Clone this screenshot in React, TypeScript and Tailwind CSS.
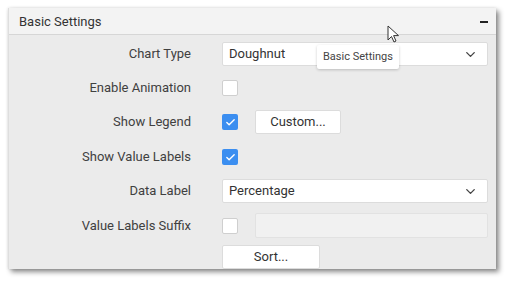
import { ChevronDown, Check } from "lucide-react";

const font = { fontFamily: "Roboto, 'Liberation Sans', sans-serif" };

const Label = ({ text }: { text: string }) => (
  <div className="w-[182px] shrink-0 text-right text-[13px] text-[#404040]">{text}</div>
);

const Box = ({ checked }: { checked?: boolean }) =>
  checked ? (
    <div className="w-4 h-4 rounded-[2px] bg-[#3b8ef0] flex items-center justify-center">
      <Check size={11} strokeWidth={3} className="text-white" />
    </div>
  ) : (
    <div className="w-4 h-4 rounded-[2px] bg-white border border-[#cfcfcf]" />
  );

const Select = ({ value }: { value: string }) => (
  <div className="flex-1 mr-[8px] h-6 bg-white border border-[#dcdcdc] rounded-[2px] flex items-center justify-between pl-[6px] pr-[9px] text-[13px] text-[#333]">
    <span>{value}</span>
    <ChevronDown size={15} strokeWidth={2.2} className="text-[#444]" />
  </div>
);

export default function App() {
  return (
    <div className="w-[509px] h-[283px] bg-white relative" style={font}>
      <div className="absolute left-[8px] top-[8px] w-[488px] h-[261px] bg-[#ebebeb] border-l border-[#dedede] shadow-[3px_3px_5px_rgba(0,0,0,0.45),0_0_3px_rgba(0,0,0,0.12)] flex flex-col overflow-hidden">
        <div className="h-[27px] pt-[2px] bg-[#f3f3f3] border-b border-[#d6d6d6] flex items-center justify-between pl-[10px] pr-[8px] shrink-0">
          <span className="text-[13px] text-[#333]">Basic Settings</span>
          <div className="w-[8px] h-[2px] bg-[#222]" />
        </div>
        <div className="flex flex-col pt-[7px]">
          <div className="flex items-center gap-[31px] h-6">
            <Label text="Chart Type" />
            <Select value="Doughnut" />
          </div>
          <div className="flex items-center gap-[31px] h-6 mt-[10px]">
            <Label text="Enable Animation" />
            <Box />
          </div>
          <div className="flex items-center gap-[31px] h-6 mt-[10px]">
            <Label text="Show Legend" />
            <Box checked />
            <div className="ml-[-14px] w-[86px] h-6 bg-white border border-[#dcdcdc] rounded-[2px] flex items-center justify-center text-[13px] text-[#333]">
              Custom...
            </div>
          </div>
          <div className="flex items-center gap-[31px] h-6 mt-[11px]">
            <Label text="Show Value Labels" />
            <Box checked />
          </div>
          <div className="flex items-center gap-[31px] h-6 mt-[10px]">
            <Label text="Data Label" />
            <Select value="Percentage" />
          </div>
          <div className="flex items-center gap-[31px] h-[25px] mt-[10px]">
            <Label text="Value Labels Suffix" />
            <Box />
            <div className="ml-[-14px] flex-1 mr-[8px] h-[25px] bg-[#f1f1f1] border border-[#e2e2e2] rounded-[2px]" />
          </div>
          <div className="flex items-center gap-[31px] h-6 mt-[7px]">
            <div className="w-[182px] shrink-0" />
            <div className="w-[98px] h-6 bg-white border border-[#dcdcdc] rounded-[2px] flex items-center justify-center text-[13px] text-[#333]">
              Sort...
            </div>
          </div>
        </div>
      </div>
      <div className="absolute left-[317px] top-[45px] h-[24px] px-[6px] bg-white rounded-[2px] shadow-[0_1px_3px_rgba(0,0,0,0.2)] flex items-center text-[11px] text-[#444]">
        Basic Settings
      </div>
      <svg className="absolute left-[387px] top-[25px]" width="14" height="19" viewBox="0 0 14 19">
        <path d="M1 1 L1 15 L4.5 11.5 L7 17 L9 16 L6.6 10.6 L11.5 10.6 Z" fill="white" stroke="#333" strokeWidth="1" strokeLinejoin="round" />
      </svg>
    </div>
  );
}
